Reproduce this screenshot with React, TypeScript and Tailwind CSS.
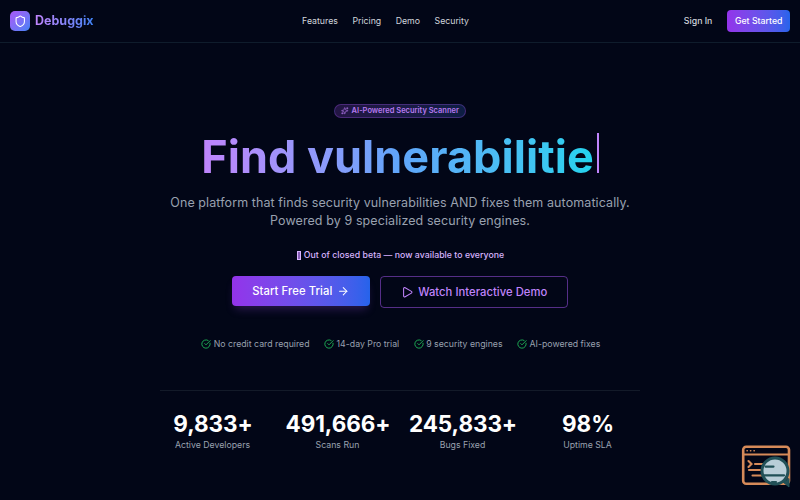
import { ArrowRight, CircleCheckBig, Play, Shield, Sparkles } from "lucide-react";

const navLinks = ["Features", "Pricing", "Demo", "Security"];

const perks = [
  "No credit card required",
  "14-day Pro trial",
  "9 security engines",
  "AI-powered fixes",
];

const stats = [
  { value: "9,833+", label: "Active Developers" },
  { value: "491,666+", label: "Scans Run" },
  { value: "245,833+", label: "Bugs Fixed" },
  { value: "98%", label: "Uptime SLA" },
];

function Header() {
  return (
    <header className="flex h-[43px] items-center justify-between border-b border-[#0f1c2c] px-2.5">
      <div className="flex w-[202px] items-center gap-[5px]">
        <div className="flex h-5 w-5 items-center justify-center rounded-[5px] bg-gradient-to-br from-[#a855f7] to-[#3b82f6]">
          <Shield className="h-[12.5px] w-[12.5px] text-white" />
        </div>
        <span className="bg-gradient-to-r from-[#c084fc] to-[#3b82f6] bg-clip-text pt-px text-[12.5px] font-bold text-transparent">
          Debuggix
        </span>
      </div>
      <nav className="flex items-center gap-[14.5px] pt-[2px] pr-px text-[8.75px] text-gray-300">
        {navLinks.map((link) => (
          <a key={link} href="#">
            {link}
          </a>
        ))}
      </nav>
      <div className="flex w-[230px] items-center justify-end gap-[15px] text-[8.75px] font-medium">
        <a href="#" className="pt-[2px] text-gray-300">
          Sign In
        </a>
        <button
          type="button"
          className="h-[22.5px] rounded-[4px] bg-gradient-to-r from-[#9333ea] to-[#2563eb] px-[7.5px] pt-[2px] text-white"
        >
          Get Started
        </button>
      </div>
    </header>
  );
}

function ScanBadge() {
  return (
    <svg
      viewBox="0 0 50 44"
      className="absolute top-[444px] left-[741px] h-11 w-[50px]"
      fill="none"
      strokeLinecap="round"
    >
      <rect x="2.2" y="2.7" width="45.8" height="37" rx="3" stroke="#d68a59" strokeWidth="2.6" />
      <path d="M2 10.5h46" stroke="#d68a59" strokeWidth="2" />
      <path d="M6 6.7h.3M9.5 6.7h.3M13 6.7h.3" stroke="#d68a59" strokeWidth="1.5" />
      <path
        d="m7.5 17 3 3-3 3M14 20h10M8 26h14M11.5 31.5h12"
        stroke="#d68a59"
        strokeWidth="2.1"
      />
      <path d="M42 38l6 5v-8z" fill="#215057" stroke="#215057" />
      <circle cx="34" cy="27" r="13" fill="#b9ced8" stroke="#215057" strokeWidth="3" />
      <path d="M24.5 22.6h8M23 31.3h20M31 38h4" stroke="#215057" strokeWidth="2.2" />
    </svg>
  );
}

export default function App() {
  return (
    <div className="relative h-[500px] w-[800px] overflow-hidden bg-[#020617] font-['Inter',sans-serif]">
      <Header />
      <main className="flex flex-col items-center pt-[61px] text-center">
        <div className="flex h-[14px] items-center gap-[3px] rounded-full border border-[#a855f7]/30 bg-gradient-to-r from-[#a855f7]/20 to-[#3b82f6]/20 px-[6px] text-[7.5px] font-semibold text-[#b77af0]">
          <Sparkles className="h-[7.5px] w-[7.5px]" />
          AI-Powered Security Scanner
        </div>

        <h1 className="mt-[15px] flex h-[45px] items-center text-[45px] leading-[45px] font-bold">
          <span className="bg-gradient-to-r from-[#c084fc] via-[#60a5fa] to-[#22d3ee] bg-clip-text pt-[2px] tracking-[0.03px] text-transparent">
            Find vulnerabilitie
          </span>
          <span className="mb-[6px] ml-[3px] h-[40px] w-[2px] bg-[#c084fc]" />
        </h1>

        <p className="mt-4 w-[480px] text-[12.5px] leading-[17.5px] tracking-[0.09px] text-gray-400">
          One platform that finds security vulnerabilities AND fixes them automatically.
          <br />
          Powered by 9 specialized security engines.
        </p>

        <div className="mt-5 flex h-[13px] items-center gap-[3px] pl-px text-[8.75px] font-medium tracking-[0.03px] text-[#d8b4fe]">
          <span className="h-[9px] w-[4px] border border-[#d8b4fe] bg-[#c084fc]/70" />
          Out of closed beta — now available to everyone
        </div>

        <div className="mt-[14px] flex items-start gap-2.5 text-[11.25px] font-medium">
          <button
            type="button"
            className="flex h-[30px] w-[138px] items-center justify-center gap-[5px] rounded-[4px] bg-gradient-to-r from-[#9333ea] to-[#2563eb] tracking-[0.08px] text-white shadow-[0_6px_10px_-3px_rgba(168,85,247,0.25)]"
          >
            Start Free Trial
            <ArrowRight className="h-[12.5px] w-[12.5px]" />
          </button>
          <button
            type="button"
            className="flex h-8 w-[188px] items-center justify-center gap-[5px] rounded-[4px] border border-[#a855f7]/50 tracking-[0.03px] text-[#c084fc]"
          >
            <Play className="h-[12.5px] w-[12.5px]" />
            Watch Interactive Demo
          </button>
        </div>

        <div className="mt-[29px] flex h-[14px] items-center gap-[14.5px] pl-[1.5px] text-[8.75px] text-gray-400">
          {perks.map((perk) => (
            <span key={perk} className="flex items-center gap-[2.5px]">
              <CircleCheckBig className="h-2.5 w-2.5 text-[#22c55e]" />
              <span className="pt-px">{perk}</span>
            </span>
          ))}
        </div>

        <div className="mt-[39px] grid w-[480px] grid-cols-4 gap-5 border-t border-[#131a29] pt-5">
          {stats.map((stat) => (
            <div key={stat.label} className="flex flex-col items-center">
              <div className="pl-px text-[22.5px] leading-[25px] font-bold tracking-[-0.08px] text-white">
                {stat.value}
              </div>
              <div className="mt-[3px] text-[8.75px] leading-[13px] text-gray-400">
                {stat.label}
              </div>
            </div>
          ))}
        </div>
      </main>
      <ScanBadge />
    </div>
  );
}
